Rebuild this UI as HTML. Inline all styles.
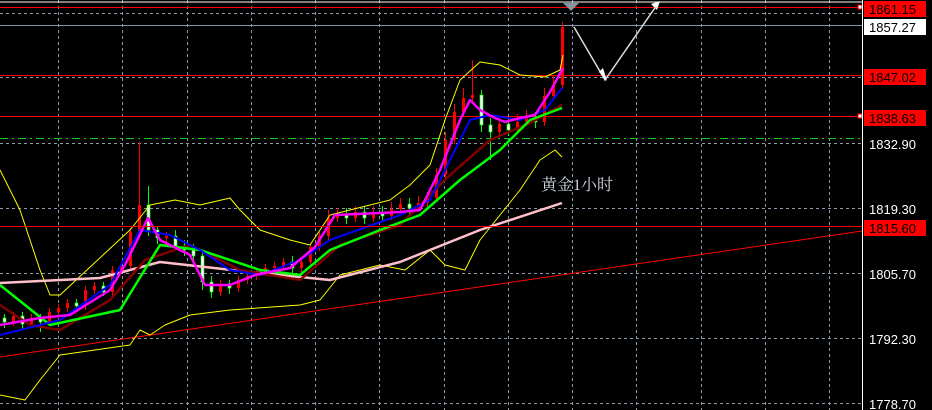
<!DOCTYPE html>
<html><head><meta charset="utf-8"><style>
html,body{margin:0;padding:0;background:#000;width:932px;height:410px;overflow:hidden}
svg{display:block}
.lb{font-family:"Liberation Sans",sans-serif;font-size:13px}
.r{fill:#f00}
.w{fill:#fff;stroke:#0f0;stroke-width:.7}
.rw{stroke:#f00;stroke-width:1}
.gw{stroke:#0f0;stroke-width:1}
</style></head><body>
<svg width="932" height="410" xmlns="http://www.w3.org/2000/svg">
<rect width="932" height="410" fill="#000"/>
<g stroke="#8a9aaa" stroke-width="1" stroke-dasharray="3,3">
<line x1="58.5" y1="0" x2="58.5" y2="410"/><line x1="122.5" y1="0" x2="122.5" y2="410"/><line x1="187.5" y1="0" x2="187.5" y2="410"/><line x1="251.5" y1="0" x2="251.5" y2="410"/><line x1="315.5" y1="0" x2="315.5" y2="410"/><line x1="379.5" y1="0" x2="379.5" y2="410"/><line x1="444.5" y1="0" x2="444.5" y2="410"/><line x1="508.5" y1="0" x2="508.5" y2="410"/><line x1="572.5" y1="0" x2="572.5" y2="410"/><line x1="636.5" y1="0" x2="636.5" y2="410"/><line x1="701.5" y1="0" x2="701.5" y2="410"/><line x1="765.5" y1="0" x2="765.5" y2="410"/><line x1="829.5" y1="0" x2="829.5" y2="410"/>
<line x1="0" y1="13.5" x2="862" y2="13.5"/><line x1="0" y1="77.5" x2="862" y2="77.5"/><line x1="0" y1="143.5" x2="862" y2="143.5"/><line x1="0" y1="208.5" x2="862" y2="208.5"/><line x1="0" y1="273.5" x2="862" y2="273.5"/><line x1="0" y1="338.5" x2="862" y2="338.5"/><line x1="0" y1="403.5" x2="862" y2="403.5"/>
</g>
<line x1="0" y1="2" x2="862" y2="2" stroke="#fff"/>
<line x1="0" y1="7.5" x2="862" y2="7.5" stroke="#f00"/>
<line x1="0" y1="25.5" x2="862" y2="25.5" stroke="#8899aa"/>
<line x1="0" y1="75.5" x2="862" y2="75.5" stroke="#f00"/>
<line x1="0" y1="116.5" x2="862" y2="116.5" stroke="#f00"/>
<line x1="0" y1="138.5" x2="862" y2="138.5" stroke="#1c1" stroke-dasharray="8,4,2,4"/>
<line x1="0" y1="357" x2="862" y2="231" stroke="#f00"/>

<!-- candles: wicks -->
<path class="rw" d="M13.5 312V326M31.5 314V328M49.5 308V326M58.5 304V316M67.5 299V312M85.5 286V310M94.5 282V294M112.5 266V296M121.5 262V274M130.5 228V270M139.5 142V236M166.5 232V242M220.5 280V296M238.5 276V292M247.5 272V284M256.5 268V280M265.5 264V276M274.5 262V272M283.5 258V270M301.5 258V272M310.5 243V266M319.5 232V251M328.5 210V240M337.5 208V222M355.5 206V222M373.5 206V222M391.5 202V220M400.5 198V213M418.5 196V212M427.5 192V207M436.5 168V202M445.5 132V179M454.5 104V144M463.5 88V116M472.5 60V102M499.5 118V136M517.5 114V134M526.5 110V126M544.5 88V126M553.5 76V100M562.5 22V89" fill="none"/>
<path class="gw" d="M4.5 314V328M22.5 312V330M40.5 314V332M76.5 299V310M103.5 282V296M148.5 186V236M157.5 226V244M175.5 230V250M184.5 240V256M193.5 244V262M202.5 250V290M211.5 276V298M229.5 280V294M292.5 256V274M346.5 208V224M364.5 206V224M382.5 206V222M409.5 198V214M481.5 90V132M490.5 118V160M508.5 116V136M535.5 112V128" fill="none"/>
<!-- red (rising) bodies -->
<g class="r">
<rect x="12" y="316" width="3" height="6"/><rect x="30" y="318" width="3" height="6"/><rect x="48" y="312" width="3" height="10"/><rect x="57" y="308" width="3" height="4"/><rect x="66" y="303" width="3" height="5"/><rect x="84" y="290" width="3" height="16"/><rect x="93" y="286" width="3" height="4"/><rect x="111" y="270" width="3" height="22"/><rect x="120" y="266" width="3" height="4"/><rect x="129" y="232" width="3" height="34"/><rect x="138" y="205" width="3" height="27"/><rect x="165" y="236" width="3" height="2"/><rect x="219" y="284" width="3" height="8"/><rect x="237" y="280" width="3" height="8"/><rect x="246" y="276" width="3" height="4"/><rect x="255" y="272" width="3" height="4"/><rect x="264" y="268" width="3" height="4"/><rect x="273" y="266" width="3" height="2"/><rect x="282" y="262" width="3" height="4"/><rect x="300" y="262" width="3" height="6"/><rect x="309" y="247" width="3" height="15"/><rect x="318" y="236" width="3" height="11"/><rect x="327" y="218" width="3" height="18"/><rect x="336" y="214" width="3" height="4"/><rect x="354" y="212" width="3" height="6"/><rect x="372" y="212" width="3" height="6"/><rect x="390" y="209" width="3" height="7"/><rect x="399" y="204" width="3" height="5"/><rect x="417" y="203" width="3" height="5"/><rect x="426" y="198" width="3" height="5"/><rect x="435" y="175" width="3" height="23"/><rect x="444" y="140" width="3" height="35"/><rect x="453" y="112" width="3" height="28"/><rect x="462" y="98" width="3" height="14"/><rect x="471" y="95" width="3" height="3"/><rect x="498" y="124" width="3" height="8"/><rect x="516" y="122" width="3" height="8"/><rect x="525" y="118" width="3" height="4"/><rect x="543" y="96" width="3" height="26"/><rect x="552" y="85" width="3" height="11"/><rect x="561" y="27" width="3" height="58"/>
</g>
<!-- falling bodies -->
<g class="w">
<rect x="3" y="318" width="3" height="4"/><rect x="21" y="316" width="3" height="8"/><rect x="39" y="318" width="3" height="4"/><rect x="75" y="303" width="3" height="3"/><rect x="102" y="286" width="3" height="6"/><rect x="147" y="205" width="3" height="25"/><rect x="156" y="230" width="3" height="8"/><rect x="174" y="236" width="3" height="10"/><rect x="183" y="246" width="3" height="4"/><rect x="192" y="250" width="3" height="6"/><rect x="201" y="256" width="3" height="26"/><rect x="210" y="282" width="3" height="10"/><rect x="228" y="284" width="3" height="4"/><rect x="291" y="262" width="3" height="6"/><rect x="345" y="214" width="3" height="4"/><rect x="363" y="212" width="3" height="6"/><rect x="381" y="212" width="3" height="4"/><rect x="408" y="204" width="3" height="4"/><rect x="480" y="95" width="3" height="30"/><rect x="489" y="125" width="3" height="7"/><rect x="507" y="124" width="3" height="6"/><rect x="534" y="118" width="3" height="4"/>
</g>

<g fill="none" stroke-linejoin="round">
<polyline stroke="#ff0" stroke-width="1" points="0,170 20,210 40,270 50,295 60,295 130,230 150,205 175,200 200,205 230,198 240,210 260,230 290,240 310,245 330,215 350,210 390,200 410,185 430,165 445,120 460,80 480,62 500,65 520,75 545,77 560,70 563,55"/>
<polyline stroke="#ff0" stroke-width="1" points="0,395 25,400 40,380 60,355 130,345 140,330 150,335 165,325 190,315 230,310 300,305 320,300 340,275 380,265 405,270 430,250 445,265 465,270 480,240 500,215 520,190 540,160 555,150 562,157"/>
<polyline stroke="#ffc0cb" stroke-width="2.5" points="0,283 100,278 160,262 250,272 330,280 400,262 480,230 562,203"/>
<polyline stroke="#800000" stroke-width="2.5" points="0,305 30,325 60,330 110,300 145,260 190,245 240,270 300,280 340,245 400,225 450,175 490,140 530,123 562,105"/>
<polyline stroke="#00ff00" stroke-width="2.5" points="0,285 50,325 120,310 160,245 200,250 260,270 300,275 330,250 380,230 420,215 460,180 500,150 530,120 562,108"/>
<polyline stroke="#0000ff" stroke-width="2" points="0,335 60,320 110,285 140,230 170,235 200,250 230,270 260,275 300,260 330,240 400,215 430,200 450,160 470,120 490,115 520,120 545,110 562,88"/>
<polyline stroke="#ff00ff" stroke-width="2.5" points="0,325 40,318 70,315 110,290 125,265 148,218 160,240 190,255 205,285 230,285 255,275 290,268 315,247 335,215 380,213 400,212 420,210 440,170 460,120 470,100 480,110 495,118 505,122 520,118 535,115 550,92 563,68"/>
</g>
<line x1="0" y1="226.5" x2="862" y2="226.5" stroke="#f00"/>

<rect x="858" y="5" width="4" height="4" fill="#fff" stroke="#f00"/>
<rect x="858" y="114" width="4" height="4" fill="#fff" stroke="#f00"/>
<polygon points="563,3 579,3 571,11" fill="#8a949c"/>
<polyline points="574,27 605,80 659,2" fill="none" stroke="#ddd" stroke-width="1.5"/>
<polygon points="599,72 607,81 603,68" fill="#fff"/>
<polygon points="651,4 660,1 657,10" fill="#fff"/>
<text x="541" y="190" font-family="'Liberation Serif','Noto Serif CJK SC',serif" font-size="16" fill="#d0d8e4">黄金1小时</text>
<line x1="862.5" y1="0" x2="862.5" y2="410" stroke="#fff"/>
<g class="lb">
<rect x="864" y="1" width="62" height="16" fill="#f00"/><text x="869" y="14" fill="#000">1861.15</text>
<rect x="864" y="19" width="62" height="16" fill="#fff"/><text x="869" y="32" fill="#000">1857.27</text>
<rect x="864" y="69" width="62" height="16" fill="#f00"/><text x="869" y="82" fill="#000">1847.02</text>
<rect x="864" y="110" width="62" height="16" fill="#f00"/><text x="869" y="123" fill="#000">1838.63</text>
<rect x="864" y="220" width="62" height="16" fill="#f00"/><text x="869" y="233" fill="#000">1815.60</text>
<text x="869" y="149" fill="#fff">1832.90</text>
<text x="869" y="214" fill="#fff">1819.30</text>
<text x="869" y="279" fill="#fff">1805.70</text>
<text x="869" y="344" fill="#fff">1792.30</text>
<text x="869" y="409" fill="#fff">1778.70</text>
</g>
</svg>
</body></html>
